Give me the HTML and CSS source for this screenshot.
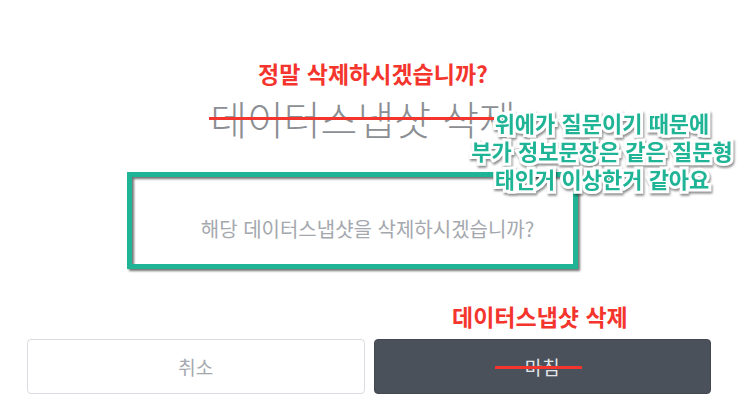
FILE: index.html
```html
<!DOCTYPE html>
<html lang="ko">
  <head>
    <meta charset="UTF-8">
    <meta name="viewport" content="width=device-width, initial-scale=1.0">
    <title>데이터스냅샷 삭제</title>
    <link rel="stylesheet" href="styles.css">
  </head>
  <body>
    <div class="page">
      <div class="dialog">
        <h1 class="dialog-title">데이터스냅샷 삭제</h1>
        <div class="dialog-message">해당 데이터스냅샷을 삭제하시겠습니까?</div>
        <div class="dialog-actions">
          <button class="btn btn-cancel">취소</button>
          <button class="btn btn-confirm">마침</button>
        </div>
      </div>

      <!-- review notes drawn on top of the dialog -->
      <div class="note note-red note-heading">정말 삭제하시겠습니까?</div>
      <div class="strike strike-title"></div>
      <div class="note note-green">위에가 질문이기 때문에<br>부가 정보문장은 같은 질문형<br>태인거 이상한거 같아요</div>
      <div class="note note-red note-button">데이터스냅샷 삭제</div>
      <div class="strike strike-button"></div>
    </div>
  </body>
</html>
```

FILE: styles.css
```css
:root{
  --red: #f4352d;
  --green: #1fb495;
  --gray-text: #a4a8ae;
  --dark-btn: #4b515a;
}
*{
    margin: 0;
    padding: 0;
    box-sizing: border-box;
}
body{
    background-color: white;
    font-family: "Noto Sans CJK KR", "Noto Sans", sans-serif;
}
.page{
    position: relative;
    width: 754px;
    height: 409px;
    overflow: hidden;
}
.dialog{
    padding: 95px 43px 0 27px;
}
.dialog-title{
    font-size: 40px;
    font-weight: 300;
    line-height: 46px;
    color: #8b8e93;
    text-align: center;
    padding-right: 12px;
}
.dialog-message{
    position: relative;
    width: 451px;
    height: 97px;
    margin: 31px 0 0 100px;
    padding: 44px 0 0 30px;
    font-size: 20px;
    line-height: 26px;
    color: var(--gray-text);
    text-align: center;
}
/* highlight frame round the message */
.dialog-message::after{
    content: "";
    position: absolute;
    inset: 0;
    border: 5px solid var(--green);
    filter: drop-shadow(2px 2px 1px rgba(0, 0, 0, 0.55));
}
.dialog-actions{
    display: flex;
    gap: 9px;
    margin-top: 70px;
}
.btn{
    flex: 1;
    height: 55px;
    border-radius: 4px;
    font-family: inherit;
    font-size: 19px;
    cursor: pointer;
}
.btn-cancel{
    background-color: white;
    border: 1px solid #dadce1;
    color: var(--gray-text);
}
.btn-confirm{
    background-color: var(--dark-btn);
    border: 1px solid #444951;
    color: #e2e4e7;
}
.note{
    position: absolute;
    font-weight: 700;
    white-space: nowrap;
}
.note-red{
    color: var(--red);
}
.note-heading{
    left: 258px;
    top: 57px;
    font-size: 23px;
    line-height: 32px;
}
.note-button{
    left: 452px;
    top: 300px;
    font-size: 23px;
    line-height: 32px;
}
.note-green{
    left: 452px;
    top: 108px;
    width: 300px;
    font-size: 22px;
    line-height: 28px;
    text-align: center;
    color: var(--green);
    -webkit-text-stroke: 6px white;
    paint-order: stroke fill;
    filter: drop-shadow(1px 2px 1px rgba(0, 0, 0, 0.45));
}
.strike{
    position: absolute;
    height: 3px;
    background-color: var(--red);
}
.strike-title{
    left: 209px;
    top: 117px;
    width: 285px;
}
.strike-button{
    left: 495px;
    top: 366px;
    width: 87px;
}
```
